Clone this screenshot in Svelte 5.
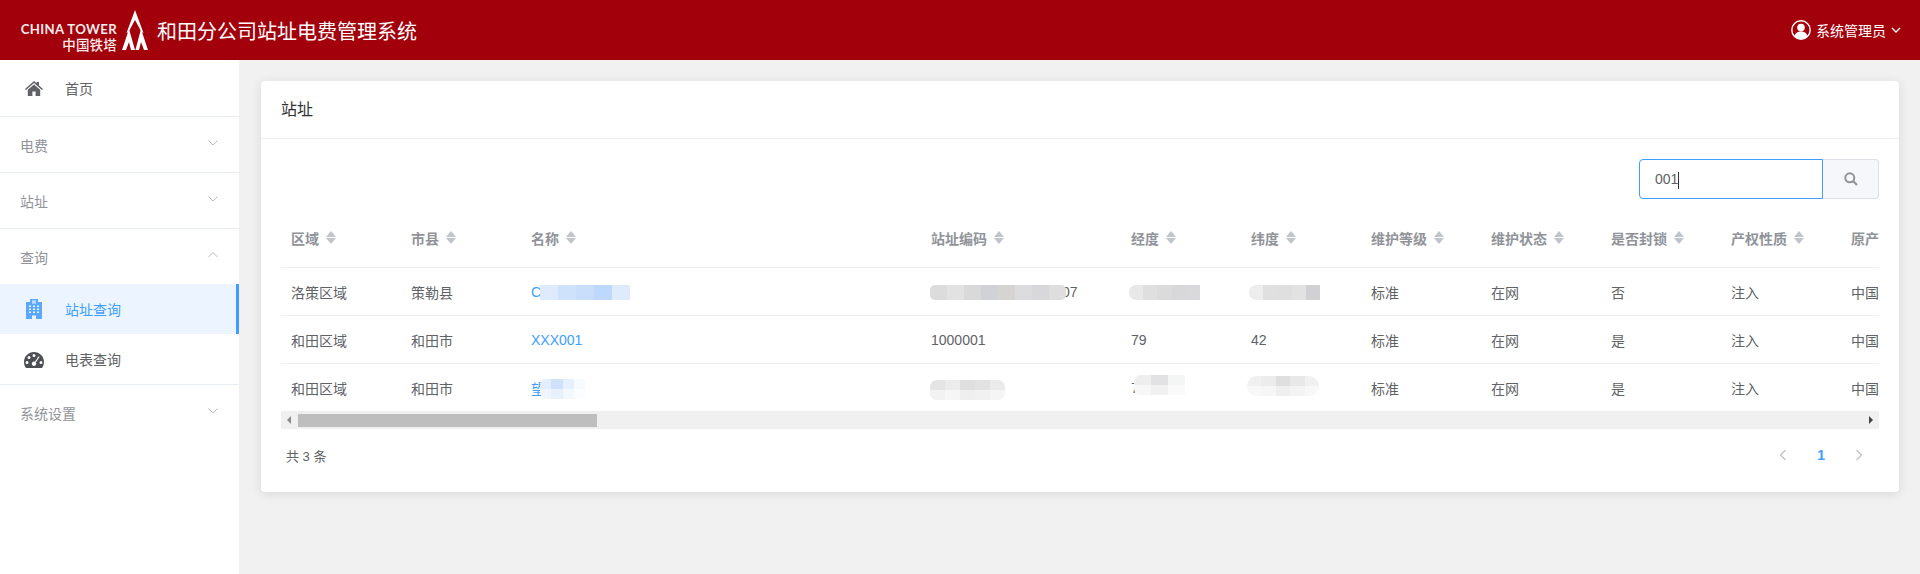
<script>
    const columns = [
        { title: '区域', width: 120 },
        { title: '市县', width: 120 },
        { title: '名称', width: 400 },
        { title: '站址编码', width: 200 },
        { title: '经度', width: 120 },
        { title: '纬度', width: 120 },
        { title: '维护等级', width: 120 },
        { title: '维护状态', width: 120 },
        { title: '是否封锁', width: 120 },
        { title: '产权性质', width: 120 },
        { title: '原产', width: 38 }
    ];

    // blurs hide the masked part of a cell: x from cell text, t from row middle
    const rows = [
        {
            cells: ['洛策区域', '策勒县', 'C', '', '', '', '标准', '在网', '否', '注入', '中国'],
            blurs: {
                2: { x: 9, w: 90, h: 15, t: -7, r: '0', c: ['#deebfd', '#cfe2fc', '#c9defb', '#bdd8fb', '#deebfd'] },
                3: { x: -1, w: 136, h: 15, t: -7, r: '5px', c: ['#dcdcdc', '#e2e2e2', '#d9d9d9', '#d1d2d6', '#d6d3d3', '#dcdcde', '#d8d8da', '#dededf'], after: '07', afterX: 141 },
                4: { x: -2, w: 71, h: 15, t: -7, r: '7px 0 0 7px', c: ['#e8e8e8', '#dfdfdf', '#dbdbdb', '#d8d8da', '#d9d9db'] },
                5: { x: -2, w: 71, h: 15, t: -7, r: '7px 0 0 7px', c: ['#ededed', '#e0e0e0', '#dfdfdf', '#e2e2e2', '#d1d1d3'] }
            }
        },
        { cells: ['和田区域', '和田市', 'XXX001', '1000001', '79', '42', '标准', '在网', '是', '注入', '中国'], blurs: {} },
        {
            cells: ['和田区域', '和田市', '望', '', '7', '', '标准', '在网', '是', '注入', '中国'],
            blurs: {
                2: { x: 9, w: 45, h: 20, t: -8.5, r: '7px 0 0 7px', fade: true, c: ['#e2edfd', '#cfe2fc', '#e6f0fe', '#f7faff'] },
                3: { x: -1, w: 75, h: 20, t: -7.5, r: '7px', fade: true, c: ['#e4e4e4', '#ececec', '#dfdfdf', '#e2e2e2', '#ebebeb'] },
                4: { x: 3, w: 51, h: 20, t: -12.5, r: '7px 0 0 7px', fade: true, c: ['#eeeeef', '#e2e2e4', '#f4f5f5'] },
                5: { x: -4, w: 72, h: 20, t: -11.5, r: '10px', fade: true, c: ['#f0f0f0', '#ececec', '#dfdfdf', '#e8e8e8', '#f1f1f1'] }
            }
        }
    ];

    const menuTop = [{ label: '电费' }, { label: '站址' }];
</script>

<div class="page">
    <header class="topbar">
        <div class="logo">
            <div class="logo-text">
                <span class="logo-en">CHINA TOWER</span>
                <span class="logo-cn">中国铁塔</span>
            </div>
            <svg class="logo-mark" width="26" height="40" viewBox="0 0 26 40">
                <path d="M13 0 L21.5 23 L19.5 22 L13 10 L6.5 22 L4.5 23 Z" fill="#fff" />
                <path d="M7 19 L13 40 L9 40 L7 32 L4 40 L0 40 Z" fill="#fff" />
                <path d="M19 19 L26 40 L22 40 L19 32 L17 40 L13.4 40 Z" fill="#fff" />
            </svg>
        </div>
        <h1 class="title">和田分公司站址电费管理系统</h1>
        <div class="user">
            <svg width="20" height="20" viewBox="0 0 20 20">
                <circle cx="10" cy="10" r="9.2" fill="none" stroke="#fff" stroke-width="1.4" />
                <circle cx="10" cy="7.6" r="3.8" fill="#fff" />
                <path d="M3.6 16 C4.4 12.6 7 11.4 10 11.4 C13 11.4 15.6 12.6 16.4 16 C14.8 18 12.4 19 10 19 C7.6 19 5.2 18 3.6 16 Z" fill="#fff" />
            </svg>
            <span>系统管理员</span>
            <svg width="10" height="10" viewBox="0 0 10 10">
                <path d="M1 3 L5 7 L9 3" fill="none" stroke="#fff" stroke-width="1.3" />
            </svg>
        </div>
    </header>

    <div class="body">
        <aside class="sidebar">
            <div class="item home">
                <svg class="icon" width="18" height="15" viewBox="0 0 18 15">
                    <path d="M9 0 L11.6 2.3 V1 H14 V4.4 L18 8 L17 9 L9 2 L1 9 L0 8 Z" fill="#606266" />
                    <path d="M9 3.4 L15.2 8.8 V15 H10.6 V10.6 H7.4 V15 H2.8 V8.8 Z" fill="#606266" />
                </svg>
                <span>首页</span>
            </div>
            {#each menuTop as m}
                <div class="group">
                    <span>{m.label}</span>
                    <svg width="12" height="8" viewBox="0 0 12 8"><path d="M1.5 1.5 L6 6 L10.5 1.5" fill="none" stroke="#b4b8c0" stroke-width="1" /></svg>
                </div>
            {/each}
            <div class="group open">
                <span>查询</span>
                <svg width="12" height="8" viewBox="0 0 12 8"><path d="M1.5 6 L6 1.5 L10.5 6" fill="none" stroke="#b4b8c0" stroke-width="1" /></svg>
            </div>
            <div class="item sub active">
                <svg class="icon" width="16" height="20" viewBox="0 0 16 20">
                    <path fill-rule="evenodd" fill="#5aa9ff" d="M4 0 H12 V3 H16 V20 H10 V16.5 H6 V20 H0 V3 H4 Z M6.4 1 V5 H7.4 V3.5 H8.6 V5 H9.6 V1 H8.6 V2.5 H7.4 V1 Z M3 6.5 V8 H5 V6.5 Z M7 6.5 V8 H9 V6.5 Z M11 6.5 V8 H13 V6.5 Z M3 9.5 V11 H5 V9.5 Z M7 9.5 V11 H9 V9.5 Z M11 9.5 V11 H13 V9.5 Z M3 12.5 V14 H5 V12.5 Z M7 12.5 V14 H9 V12.5 Z M11 12.5 V14 H13 V12.5 Z" />
                </svg>
                <span>站址查询</span>
            </div>
            <div class="item sub last">
                <svg class="icon gauge" width="20" height="16" viewBox="0 0 20 16">
                    <path fill-rule="evenodd" fill="#4d4f53" d="M10 0 C15.5 0 20 4.4 20 10 C20 12 19.4 14 18.4 15.6 C18.2 15.9 17.9 16 17.6 16 H2.4 C2.1 16 1.8 15.9 1.6 15.6 C0.6 14 0 12 0 10 C0 4.4 4.5 0 10 0 Z M10 2 A1.5 1.5 0 1 0 10 5 A1.5 1.5 0 1 0 10 2 Z M5 4 A1.5 1.5 0 1 0 5 7 A1.5 1.5 0 1 0 5 4 Z M3 9 A1.5 1.5 0 1 0 3 12 A1.5 1.5 0 1 0 3 9 Z M17 9 A1.5 1.5 0 1 0 17 12 A1.5 1.5 0 1 0 17 9 Z M14.6 4.2 L11 9.8 C10.7 9.7 10.4 9.6 10 9.6 C8.7 9.6 7.8 10.6 7.8 11.8 C7.8 13 8.8 14 10 14 C11.2 14 12.2 13 12.2 11.8 C12.2 11.3 12 10.9 11.8 10.5 L15.6 4.8 Z" />
                </svg>
                <span>电表查询</span>
            </div>
            <div class="group plain">
                <span>系统设置</span>
                <svg width="12" height="8" viewBox="0 0 12 8"><path d="M1.5 1.5 L6 6 L10.5 1.5" fill="none" stroke="#b4b8c0" stroke-width="1" /></svg>
            </div>
        </aside>

        <main class="main">
            <section class="card">
                <div class="card-head">站址</div>
                <div class="card-body">
                    <div class="toolbar">
                        <div class="search">
                            <div class="search-input">001<i class="caret"></i></div>
                            <div class="search-btn">
                                <svg width="14" height="14" viewBox="0 0 14 14">
                                    <circle cx="5.8" cy="5.8" r="4.5" fill="none" stroke="#909399" stroke-width="2" />
                                    <path d="M9 9 L13 13" stroke="#909399" stroke-width="2.2" />
                                </svg>
                            </div>
                        </div>
                    </div>

                    <div class="table">
                        <div class="tr th">
                            {#each columns as col}
                                <div class="td" style="width: {col.width}px">
                                    <span>{col.title}</span>
                                    <i class="sort"><b class="up"></b><b class="down"></b></i>
                                </div>
                            {/each}
                        </div>
                        {#each rows as row}
                            <div class="tr">
                                {#each row.cells as cell, i}
                                    <div class="td" class:link={i === 2} style="width: {columns[i].width}px">
                                        <span>{cell}</span>
                                        {#if row.blurs[i]}
                                            {@const b = row.blurs[i]}
                                            {#if b.after}
                                                <em class="after" style="left: {b.afterX}px">{b.after}</em>
                                            {/if}
                                            <div class="blur" class:fade={b.fade} style="left: {10 + b.x}px; width: {b.w}px; height: {b.h}px; margin-top: {b.t}px; border-radius: {b.r}">
                                                {#each b.c as c}
                                                    <s style="background: {c}"></s>
                                                {/each}
                                            </div>
                                        {/if}
                                    </div>
                                {/each}
                            </div>
                        {/each}
                    </div>

                    <div class="scrollbar">
                        <i class="arrow left"></i>
                        <div class="thumb"></div>
                        <i class="arrow right"></i>
                    </div>

                    <div class="footer">
                        <span class="total">共 3 条</span>
                        <div class="pager">
                            <svg width="10" height="12" viewBox="0 0 10 12"><path d="M7.5 1 L2.5 6 L7.5 11" fill="none" stroke="#c0c4cc" stroke-width="1.4" /></svg>
                            <span class="page-no">1</span>
                            <svg width="10" height="12" viewBox="0 0 10 12"><path d="M2.5 1 L7.5 6 L2.5 11" fill="none" stroke="#c0c4cc" stroke-width="1.4" /></svg>
                        </div>
                    </div>
                </div>
            </section>
        </main>
    </div>
</div>

<style>
    :global(body) {
        margin: 0;
        font-family: "Liberation Sans", "Noto Sans CJK SC", sans-serif;
        font-size: 14px;
        color: #606266;
    }
    .page {
        height: 574px;
        display: flex;
        flex-direction: column;
        overflow: hidden;
    }
    .topbar {
        height: 60px;
        flex: none;
        background: #a2000a;
        color: #fff;
        display: flex;
        align-items: center;
        padding: 0 19px 0 20px;
        box-sizing: border-box;
    }
    .logo {
        display: flex;
        align-items: center;
        width: 128px;
    }
    .logo-text {
        width: 97px;
        display: flex;
        flex-direction: column;
        align-items: flex-end;
        gap: 2px;
        margin-top: 15px;
    }
    .logo-en {
        font-family: "Lato", "Liberation Sans", sans-serif;
        font-size: 13.2px;
        font-weight: bold;
        line-height: 14px;
        white-space: nowrap;
        letter-spacing: 0.35px;
        opacity: 0.92;
    }
    .logo-cn {
        font-size: 13.5px;
        font-weight: 500;
        letter-spacing: 0.2px;
        line-height: 16px;
        opacity: 0.92;
    }
    .logo-mark {
        margin-left: 5px;
        flex: none;
    }
    .title {
        margin: 0 0 0 9px;
        font-size: 20px;
        font-weight: normal;
        flex: 1;
    }
    .user {
        display: flex;
        align-items: center;
        gap: 5px;
        font-size: 14px;
    }
    .body {
        flex: 1;
        display: flex;
        background: #f1f1f2;
        min-height: 0;
    }
    .sidebar {
        width: 239px;
        flex: none;
        background: #fff;
    }
    .item {
        display: flex;
        align-items: center;
        padding-left: 24px;
        position: relative;
    }
    .item .icon {
        width: 20px;
        flex: none;
        margin-right: 21px;
    }
    .item .gauge {
        margin-top: 2px;
    }
    .home {
        height: 57px;
        border-bottom: 1px solid #e8ecf3;
        box-sizing: border-box;
    }
    .group {
        height: 56px;
        border-bottom: 1px solid #e8ecf3;
        box-sizing: border-box;
        display: flex;
        align-items: center;
        justify-content: space-between;
        padding: 0 20px;
        color: #909399;
    }
    .group svg {
        margin-top: -4px;
    }
    .group.open {
        height: 55px;
        border-bottom: 0;
    }
    .group.plain {
        border-bottom: 0;
    }
    .sub {
        height: 50px;
    }
    .sub.last {
        height: 51px;
        box-sizing: border-box;
        border-bottom: 1px solid #e8ecf3;
    }
    .active {
        background: #ecf5ff;
        color: #409eff;
        border-right: 3px solid #409eff;
        box-sizing: border-box;
    }
    .main {
        flex: 1;
        padding: 21px 21px 0 22px;
        min-width: 0;
    }
    .card {
        background: #fff;
        border-radius: 4px;
        box-shadow: 0 2px 12px 0 rgba(0, 0, 0, 0.1);
        height: 411px;
        box-sizing: border-box;
    }
    .card-head {
        height: 58px;
        line-height: 57px;
        padding: 0 20px;
        font-size: 16px;
        color: #303133;
        border-bottom: 1px solid #ebeef5;
        box-sizing: border-box;
    }
    .card-body {
        padding: 20px 20px 0;
    }
    .toolbar {
        display: flex;
        justify-content: flex-end;
        height: 41px;
    }
    .search {
        display: flex;
        height: 40px;
    }
    .search-input {
        width: 184px;
        box-sizing: border-box;
        border: 1px solid #409eff;
        border-radius: 4px 0 0 4px;
        padding-left: 15px;
        line-height: 38px;
    }
    .caret {
        display: inline-block;
        width: 1px;
        height: 17px;
        background: #303133;
        vertical-align: middle;
    }
    .search-btn {
        width: 56px;
        box-sizing: border-box;
        background: #f5f7fa;
        border: 1px solid #dcdfe6;
        border-left: 0;
        border-radius: 0 4px 4px 0;
        display: flex;
        align-items: center;
        justify-content: center;
    }
    .table {
        overflow: hidden;
        margin-top: 8px;
    }
    .tr {
        display: flex;
        height: 48px;
        border-bottom: 1px solid #ebeef5;
        box-sizing: border-box;
    }
    .tr:last-child {
        height: 47px;
        border-bottom: 0;
    }
    .th {
        height: 60px;
        color: #909399;
        font-weight: bold;
    }
    .td {
        flex: none;
        display: flex;
        align-items: center;
        padding-left: 10px;
        box-sizing: border-box;
        white-space: nowrap;
        position: relative;
        overflow: hidden;
    }
    .link {
        color: #409eff;
    }
    .sort {
        display: inline-flex;
        flex-direction: column;
        margin-left: 7px;
        gap: 1px;
    }
    .sort b {
        display: block;
        width: 0;
        height: 0;
        border-left: 5px solid transparent;
        border-right: 5px solid transparent;
    }
    .up {
        border-bottom: 6px solid #c0c4cc;
    }
    .down {
        border-top: 6px solid #c0c4cc;
    }
    .blur {
        position: absolute;
        top: 50%;
        display: flex;
        overflow: hidden;
    }
    .blur s {
        flex: 1;
        display: block;
    }
    .fade::after {
        content: "";
        position: absolute;
        left: 0;
        right: 0;
        top: 50%;
        bottom: 0;
        background: rgba(255, 255, 255, 0.5);
    }
    .after {
        position: absolute;
        top: 50%;
        transform: translateY(-50%);
        font-style: normal;
    }
    .scrollbar {
        height: 18px;
        background: #f0f0f1;
        display: flex;
        align-items: center;
        position: relative;
    }
    .thumb {
        width: 299px;
        height: 13px;
        background: #bebebe;
        margin-left: 17px;
    }
    .arrow {
        position: absolute;
        width: 0;
        height: 0;
        border-top: 4px solid transparent;
        border-bottom: 4px solid transparent;
    }
    .arrow.left {
        left: 6px;
        border-right: 4px solid #8a8a8a;
    }
    .arrow.right {
        right: 6px;
        border-left: 4px solid #444;
    }
    .footer {
        display: flex;
        justify-content: space-between;
        align-items: center;
        height: 52px;
        padding: 0 5px;
    }
    .total {
        font-size: 13px;
    }
    .pager {
        display: flex;
        align-items: center;
        gap: 29px;
        padding-right: 10px;
    }
    .page-no {
        color: #409eff;
        font-weight: bold;
        font-size: 14px;
    }
</style>
